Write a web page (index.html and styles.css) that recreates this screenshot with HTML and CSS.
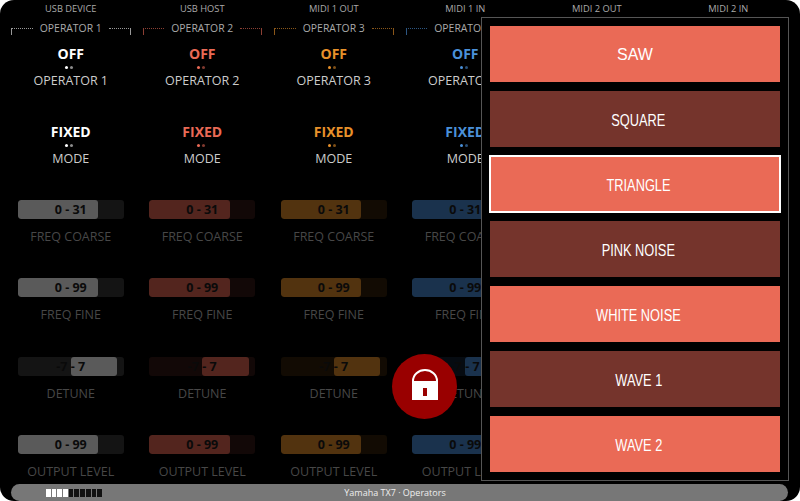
FILE: index.html
```html
<html>

<head>
  <link rel="stylesheet" href="styles.css">
</head>

<body>
  <div class="screen">
    <div class="ports">
      <span>USB DEVICE</span>
      <span>USB HOST</span>
      <span>MIDI 1 OUT</span>
      <span>MIDI 1 IN</span>
      <span>MIDI 2 OUT</span>
      <span>MIDI 2 IN</span>
    </div>

    <div class="operators">
      <div class="op op1">
        <div class="op-head"><i></i><span>OPERATOR 1</span><i></i></div>
        <div class="cell"><div class="value">OFF</div><div class="dots"><b></b><b></b></div><div class="name">OPERATOR 1</div></div>
        <div class="cell"><div class="value">FIXED</div><div class="dots"><b></b><b></b></div><div class="name">MODE</div></div>
        <div class="cell"><div class="bar"><div class="fill" style="width:76%"></div><span>0 - 31</span></div><div class="name dim">FREQ COARSE</div></div>
        <div class="cell"><div class="bar"><div class="fill" style="width:76%"></div><span>0 - 99</span></div><div class="name dim">FREQ FINE</div></div>
        <div class="cell"><div class="bar"><div class="fill" style="width:44%;margin-left:50%"></div><span>-7 - 7</span></div><div class="name dim">DETUNE</div></div>
        <div class="cell"><div class="bar"><div class="fill" style="width:76%"></div><span>0 - 99</span></div><div class="name dim">OUTPUT LEVEL</div></div>
      </div>
      <div class="op op2">
        <div class="op-head"><i></i><span>OPERATOR 2</span><i></i></div>
        <div class="cell"><div class="value">OFF</div><div class="dots"><b></b><b></b></div><div class="name">OPERATOR 2</div></div>
        <div class="cell"><div class="value">FIXED</div><div class="dots"><b></b><b></b></div><div class="name">MODE</div></div>
        <div class="cell"><div class="bar"><div class="fill" style="width:76%"></div><span>0 - 31</span></div><div class="name dim">FREQ COARSE</div></div>
        <div class="cell"><div class="bar"><div class="fill" style="width:76%"></div><span>0 - 99</span></div><div class="name dim">FREQ FINE</div></div>
        <div class="cell"><div class="bar"><div class="fill" style="width:44%;margin-left:50%"></div><span>-7 - 7</span></div><div class="name dim">DETUNE</div></div>
        <div class="cell"><div class="bar"><div class="fill" style="width:76%"></div><span>0 - 99</span></div><div class="name dim">OUTPUT LEVEL</div></div>
      </div>
      <div class="op op3">
        <div class="op-head"><i></i><span>OPERATOR 3</span><i></i></div>
        <div class="cell"><div class="value">OFF</div><div class="dots"><b></b><b></b></div><div class="name">OPERATOR 3</div></div>
        <div class="cell"><div class="value">FIXED</div><div class="dots"><b></b><b></b></div><div class="name">MODE</div></div>
        <div class="cell"><div class="bar"><div class="fill" style="width:76%"></div><span>0 - 31</span></div><div class="name dim">FREQ COARSE</div></div>
        <div class="cell"><div class="bar"><div class="fill" style="width:76%"></div><span>0 - 99</span></div><div class="name dim">FREQ FINE</div></div>
        <div class="cell"><div class="bar"><div class="fill" style="width:44%;margin-left:50%"></div><span>-7 - 7</span></div><div class="name dim">DETUNE</div></div>
        <div class="cell"><div class="bar"><div class="fill" style="width:76%"></div><span>0 - 99</span></div><div class="name dim">OUTPUT LEVEL</div></div>
      </div>
      <div class="op op4">
        <div class="op-head"><i></i><span>OPERATOR 4</span><i></i></div>
        <div class="cell"><div class="value">OFF</div><div class="dots"><b></b><b></b></div><div class="name">OPERATOR 4</div></div>
        <div class="cell"><div class="value">FIXED</div><div class="dots"><b></b><b></b></div><div class="name">MODE</div></div>
        <div class="cell"><div class="bar"><div class="fill" style="width:76%"></div><span>0 - 31</span></div><div class="name dim">FREQ COARSE</div></div>
        <div class="cell"><div class="bar"><div class="fill" style="width:76%"></div><span>0 - 99</span></div><div class="name dim">FREQ FINE</div></div>
        <div class="cell"><div class="bar"><div class="fill" style="width:44%;margin-left:50%"></div><span>-7 - 7</span></div><div class="name dim">DETUNE</div></div>
        <div class="cell"><div class="bar"><div class="fill" style="width:76%"></div><span>0 - 99</span></div><div class="name dim">OUTPUT LEVEL</div></div>
      </div>
    </div>

    <div class="status">
      <div class="meter">
        <b class="on"></b><b class="on"></b><b class="on"></b><b class="on"></b>
        <b></b><b></b><b></b><b></b><b></b><b></b>
      </div>
      <div class="title">Yamaha TX7 · Operators</div>
    </div>

    <!-- lock button sits over the operator grid -->
    <div class="lock">
      <svg width="26" height="31" viewBox="0 0 26 31">
        <path d="M1 13V12A12 11 0 0 1 25 12V13" fill="none" stroke="#fff" stroke-width="2"/>
        <rect x="0" y="12" width="26" height="19" fill="#fff"/>
        <rect x="11" y="19" width="4" height="8" fill="#990000"/>
      </svg>
    </div>

    <!-- waveform picker -->
    <div class="popup">
      <button class="opt">SAW</button>
      <button class="opt off"><span>SQUARE</span></button>
      <button class="opt current"><span>TRIANGLE</span></button>
      <button class="opt off"><span>PINK NOISE</span></button>
      <button class="opt"><span>WHITE NOISE</span></button>
      <button class="opt off"><span>WAVE 1</span></button>
      <button class="opt"><span>WAVE 2</span></button>
    </div>
  </div>
</body>

</html>
```

FILE: styles.css
```css
* {
  box-sizing: border-box;
}

html, body {
  margin: 0;
  height: 100%;
  background: #fff;
  overflow: hidden;
}

.screen {
  position: relative;
  display: flex;
  flex-direction: column;
  width: 800px;
  height: 501px;
  background: #000;
  border-radius: 14px;
  overflow: hidden;
  font-family: 'Open Sans', sans-serif;
  color: #ccc;
}

.ports {
  display: grid;
  grid-template-columns: repeat(6, 1fr);
  padding: 0 6px 0 5px;
  height: 17px;
  line-height: 17px;
  font-size: 9.3px;
  text-align: center;
  color: #aaa;
}

.operators {
  flex: 1;
  min-height: 0;
  display: grid;
  grid-template-columns: repeat(6, 1fr);
  padding: 0 6px 0 5px;
}

.op1 { --c: #ffffff; }
.op2 { --c: #ea6a56; }
.op3 { --c: #e8912a; }
.op4 { --c: #4a90d9; }

.op-head {
  display: flex;
  align-items: flex-start;
  gap: 7px;
  height: 20px;
  margin: 3px 6px 0;
  font-size: 10.4px;
  line-height: 16px;
  color: #aaa;
}

.op-head i {
  flex: 1;
  height: 7px;
  margin-top: 8px;
  border-top: 1px dotted var(--c);
  opacity: .6;
}

.op-head i:first-child {
  border-left: 1px solid var(--c);
}

.op-head i:last-child {
  border-right: 1px solid var(--c);
}

.cell {
  height: 78.33px;
  padding-top: 5px;
  text-align: center;
}

.cell:last-child {
  height: auto;
}

.value {
  height: 18px;
  line-height: 18px;
  font-size: 14px;
  font-weight: 700;
  color: var(--c);
}

.dots {
  display: flex;
  justify-content: center;
  gap: 2px;
  margin: 3px 3px 0 0;
  height: 3px;
}

.dots b {
  width: 3px;
  height: 3px;
  border-radius: 50%;
  background: var(--c);
}

.dots b + b {
  opacity: .55;
}

.name {
  margin-top: 4px;
  height: 16px;
  line-height: 16px;
  font-size: 12.5px;
  color: #ccc;
}

.name.dim {
  margin-top: 10px;
  font-size: 12.5px;
  color: #474747;
}

.bar {
  position: relative;
  width: 106px;
  height: 19px;
  margin: -1.5px auto 0;
  border-radius: 3px;
  overflow: hidden;
}

.bar::before {
  content: "";
  position: absolute;
  inset: 0;
  background: var(--c);
  opacity: .08;
}

.fill {
  position: relative;
  height: 100%;
  border-radius: 3px;
  background: var(--c);
  opacity: .3;
}

.bar span {
  position: absolute;
  inset: 0;
  line-height: 19px;
  font-size: 12.5px;
  font-weight: 700;
  color: #0a0a0a;
}

.status {
  display: grid;
  grid-template-columns: 1fr auto 1fr;
  align-items: center;
  height: 17px;
  margin: 0 12px 0 11px;
  padding: 0 44px 0 35px;
  background: #777;
  border-radius: 9px;
}

.meter {
  display: flex;
  gap: 1px;
  height: 8px;
}

.meter b {
  width: 4.7px;
  background: #111;
}

.meter b.on {
  background: #fff;
}

.title {
  font-size: 9px;
  color: #eee;
}

.lock {
  position: absolute;
  left: 392px;
  top: 353.5px;
  display: flex;
  align-items: center;
  justify-content: center;
  width: 65px;
  height: 65px;
  padding-bottom: 3px;
  border-radius: 50%;
  background: #990000;
}

.popup {
  position: absolute;
  left: 481px;
  top: 17px;
  display: flex;
  flex-direction: column;
  gap: 9px;
  width: 308px;
  height: 464px;
  padding: 8px;
  background: #000;
  border: 1px solid #555;
}

.opt {
  flex: 1;
  border: 0;
  padding: 2px 0 0;
  background: #ea6a56;
  color: #fff;
  font-family: 'Liberation Sans', sans-serif;
  font-size: 16px;
}

/* all labels but SAW are squeezed in the real thing */
.opt span {
  display: inline-block;
  transform: translate(3.5px, 1px) scaleX(.8);
}

.opt.off {
  background: #75342c;
}

.opt.current {
  outline: 2px solid #fff;
  outline-offset: -1px;
}
```
